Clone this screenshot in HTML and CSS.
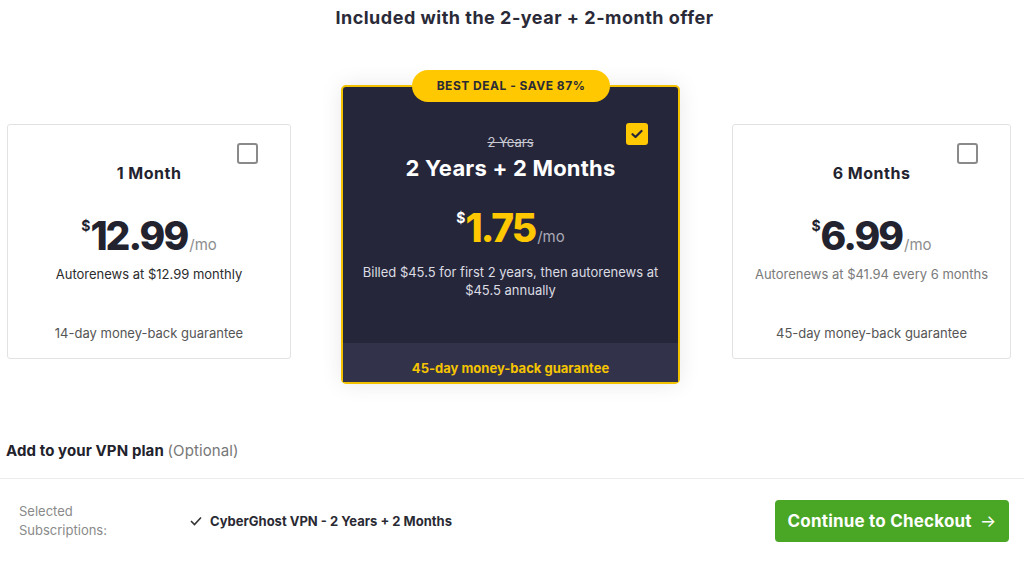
FILE: index.html
```html
<!DOCTYPE html>
<html>
<head>
    <title>Choose your plan</title>
    <link rel="stylesheet" href="styles.css">
</head>
<body>
    <h2 class="offer-title">Included with the 2-year + 2-month offer</h2>

    <div class="plans">
        <div class="plan">
            <span class="check-box"></span>
            <div class="plan-name">1 Month</div>
            <div class="price"><span class="cur">$</span><span class="amount">12.99</span><span class="per">/mo</span></div>
            <div class="renew">Autorenews at $12.99 monthly</div>
            <div class="guarantee">14-day money-back guarantee</div>
        </div>

        <div class="plan plan-best">
            <div class="badge">BEST DEAL - SAVE 87%</div>
            <span class="check-box checked">
                <svg width="12" height="10" viewBox="0 0 12 10"><path d="M1.5 5.2 L4.5 8 L10.5 2" fill="none" stroke="#25263a" stroke-width="2.2" stroke-linecap="round" stroke-linejoin="round"/></svg>
            </span>
            <div class="old-term">2 Years</div>
            <div class="plan-name">2 Years + 2 Months</div>
            <div class="price"><span class="cur">$</span><span class="amount">1.75</span><span class="per">/mo</span></div>
            <div class="renew">Billed $45.5 for first 2 years, then autorenews at<br>$45.5 annually</div>
            <div class="guarantee">45-day money-back guarantee</div>
        </div>

        <div class="plan">
            <span class="check-box"></span>
            <div class="plan-name">6 Months</div>
            <div class="price"><span class="cur">$</span><span class="amount">6.99</span><span class="per">/mo</span></div>
            <div class="renew muted">Autorenews at $41.94 every 6 months</div>
            <div class="guarantee">45-day money-back guarantee</div>
        </div>
    </div>

    <h3 class="addons">Add to your VPN plan <span>(Optional)</span></h3>

    <div class="summary">
        <div class="summary-label">Selected<br>Subscriptions:</div>
        <div class="summary-item">
            <svg width="12" height="10" viewBox="0 0 12 10"><path d="M1 5 L4.5 8.5 L11 1.5" fill="none" stroke="#333" stroke-width="1.6"/></svg>
            CyberGhost VPN - 2 Years + 2 Months
        </div>
        <button class="checkout">Continue to Checkout <span class="arrow">&rarr;</span></button>
    </div>
</body>
</html>
```

FILE: styles.css
```css
body {
    margin: 0;
    background-color: #fff;
    color: #23232f;
    font-family: Inter, "Open Sans", sans-serif;
}
.offer-title {
    margin: 0;
    padding: 8px 0 0 25px;
    font-size: 18px;
    line-height: 20px;
    font-weight: 700;
    letter-spacing: 0.5px;
    text-align: center;
    color: #2a2a38;
}
.plans {
    display: grid;
    grid-template-columns: 284px 339px 281px;
    column-gap: 50px;
    align-items: start;
    margin: 57px 0 0 7px;
}
.plans .plan:last-child {
    margin-left: 2px;
}
.plan {
    position: relative;
    display: flex;
    flex-direction: column;
    margin-top: 39px;
    height: 235px;
    box-sizing: border-box;
    padding: 38px 0 16px;
    border: 1px solid #e2e2e2;
    border-radius: 3px;
    text-align: center;
}
.check-box {
    position: absolute;
    top: 18px;
    right: 32px;
    width: 17px;
    height: 17px;
    border: 2px solid #8a8a8a;
    border-radius: 3px;
}
.plan-name {
    font-size: 16px;
    line-height: 20px;
    font-weight: 700;
    letter-spacing: 0.5px;
}
.price {
    margin-top: 33px;
    line-height: 40px;
    height: 40px;
}
.cur {
    font-size: 14px;
    font-weight: 700;
    vertical-align: 19px;
    line-height: 0;
}
.amount {
    font-size: 39px;
    font-weight: 800;
    letter-spacing: -2px;
}
.per {
    margin-left: 2px;
    font-size: 15px;
    color: #8d8d8d;
    font-weight: 400;
}
.renew {
    margin-top: 9px;
    font-size: 13px;
    line-height: 18px;
    color: #2c2c2c;
}
.renew.muted {
    color: #7a7a7a;
}
.guarantee {
    margin-top: auto;
    font-size: 13px;
    line-height: 18px;
    color: #555;
}

/* highlighted plan */
.plan-best {
    margin-top: 0;
    height: 299px;
    padding: 46px 0 0;
    background-color: #25263a;
    border: 2px solid #f2c200;
    border-radius: 5px;
    color: #fff;
    box-shadow: 0 0 22px rgba(0, 0, 0, 0.09);
}
.badge {
    position: absolute;
    top: -17px;
    left: 69px;
    width: 198px;
    height: 32px;
    line-height: 32px;
    border-radius: 16px;
    background-color: #ffc800;
    color: #2b2b35;
    font-size: 12px;
    font-weight: 700;
    letter-spacing: 0.5px;
}
.plan-best .check-box {
    top: 36px;
    right: 30px;
    width: 22px;
    height: 22px;
    border: none;
    border-radius: 3px;
    background-color: #ffc800;
    display: flex;
    align-items: center;
    justify-content: center;
}
.old-term {
    font-size: 13px;
    line-height: 18px;
    color: #c9c9d1;
    text-decoration: line-through;
}
.plan-best .plan-name {
    margin-top: 4px;
    font-size: 22px;
    line-height: 26px;
    letter-spacing: 0.2px;
}
.plan-best .price {
    margin-top: 27px;
}
.plan-best .amount {
    color: #ffc800;
}
.plan-best .per {
    color: #a9a9b6;
}
.plan-best .renew {
    margin-top: 15px;
    color: #dcdce2;
}
.plan-best .guarantee {
    padding: 16px 0 5px;
    background-color: #32334a;
    color: #f5c400;
    font-weight: 700;
}

.addons {
    margin: 57px 0 0 6px;
    font-size: 15px;
    line-height: 20px;
    font-weight: 700;
    letter-spacing: 0.1px;
    color: #22222c;
}
.addons span {
    font-weight: 400;
    color: #777;
}
.summary {
    display: flex;
    align-items: center;
    margin-top: 17px;
    padding: 21px 15px 23px 19px;
    border-top: 1px solid #ececec;
}
.summary-label {
    width: 171px;
    font-size: 13px;
    line-height: 19px;
    color: #8a8a8a;
}
.summary-item {
    display: flex;
    align-items: center;
    gap: 8px;
    font-size: 13px;
    font-weight: 700;
    color: #2a2a34;
}
.checkout {
    margin-left: auto;
    width: 234px;
    height: 42px;
    border: none;
    border-radius: 4px;
    background-color: #4aa625;
    color: #fff;
    font-family: inherit;
    font-size: 17px;
    font-weight: 700;
    letter-spacing: 0.2px;
    cursor: pointer;
}
.arrow {
    margin-left: 4px;
    font-weight: 400;
}
```
